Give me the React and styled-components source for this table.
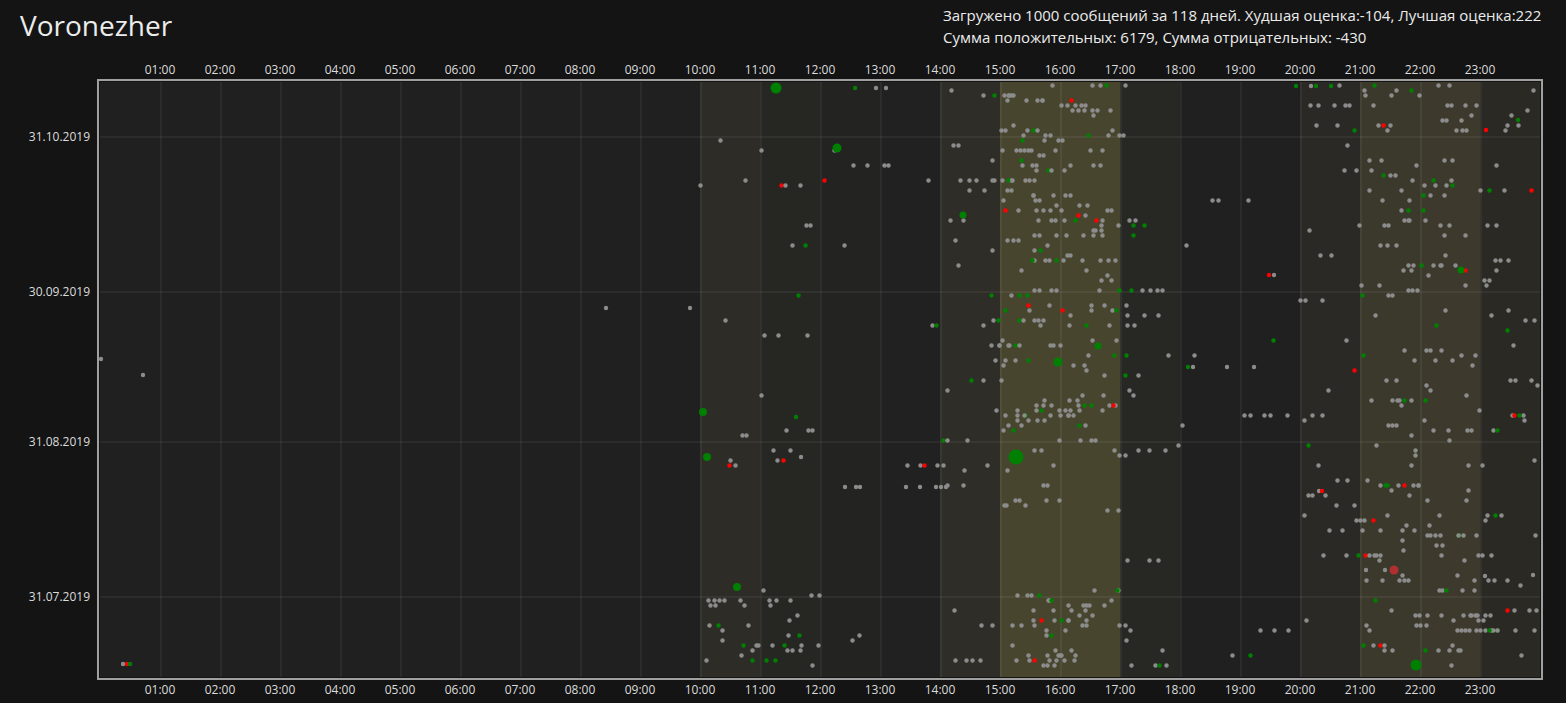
import React from "react";
import styled, { createGlobalStyle } from "styled-components";

const GlobalStyle = createGlobalStyle`
  html, body {
    margin: 0;
    padding: 0;
    background: #141414;
  }
  body {
    font-family: "Open Sans", "Noto Sans", "Liberation Sans", sans-serif;
    color: #e6e6e6;
  }
`;

// fill colour of each hour column (activity heat)
const HOUR_SHADES = [
  "#202020", "#202020", "#202020", "#202020", "#202020", "#202020",
  "#202020", "#202020", "#202020", "#202020", "#2d2c27", "#262723",
  "#232322", "#212121", "#2e2d27", "#48452f", "#48452f", "#272724",
  "#202020", "#202020", "#2a2925", "#3b392c", "#3d3a2d", "#2a2924",
];

// how often a conversation starts in each hour
const HOUR_WEIGHTS = [
  0, 0, 0, 0, 0, 0, 0, 0, 0, 0, 5, 4,
  2.5, 2, 9, 21, 20, 4, 0.8, 0.5, 6, 14, 14, 7,
];

const TICKS = [
  { label: "31.10.2019", day: 11 },
  { label: "30.09.2019", day: 42 },
  { label: "31.08.2019", day: 72 },
  { label: "31.07.2019", day: 103 },
];

const DAY_PX = 5;
const ROW_OFFSET = 3.5;

const COLORS = {
  gray: "#8c8c8c",
  green: "#008000",
  red: "#ff0000",
  dimRed: "#b03030",
};

function mulberry32(seed) {
  let a = seed;
  return function () {
    a |= 0;
    a = (a + 0x6d2b79f5) | 0;
    let t = Math.imul(a ^ (a >>> 15), 1 | a);
    t = (t + Math.imul(t ^ (t >>> 7), 61 | t)) ^ t;
    return ((t ^ (t >>> 14)) >>> 0) / 4294967296;
  };
}

const pickHour = (r) => {
  const total = HOUR_WEIGHTS.reduce((s, w) => s + w, 0);
  let v = r * total;
  for (let h = 0; h < 24; h++) {
    v -= HOUR_WEIGHTS[h];
    if (v <= 0) return h;
  }
  return 23;
};

const pushSession = (rand, dots, hour, day) => {
  const len = 1 + Math.floor(rand() * rand() * 6);
  let minute = hour * 60 + Math.floor(rand() * 60);
  for (let i = 0; i < len && minute < 1438; i++) {
    const c = rand();
    const color = c < 0.1 ? "green" : c < 0.135 ? "red" : "gray";
    dots.push({ x: minute, day, r: 2.2, color });
    minute += 4 + Math.floor(rand() * rand() * 30);
  }
};

const makeDots = () => {
  const rand = mulberry32(71119);
  const dots = [];
  let sessions = 0;
  while (sessions < 420) {
    const hour = pickHour(rand());
    const day = Math.floor(rand() * 117);
    // quiet weeks at the end of summer: almost nothing during the day
    if (day >= 81 && day <= 100 && hour < 20 && rand() < 0.94) continue;
    // the morning hours are quieter after july
    if (hour >= 10 && hour <= 13 && day < 100 && rand() < 0.35) continue;
    sessions++;
    pushSession(rand, dots, hour, day);
  }
  // july mornings
  for (let i = 0; i < 22; i++) {
    const hour = 10 + Math.floor(rand() * 2.4);
    const day = 101 + Math.floor(rand() * 16);
    pushSession(rand, dots, hour, day);
  }
  return dots;
};

// a few distinct messages placed by hand (page coords)
const NOTABLE = [
  { px: 101, py: 359, r: 2.2, color: "gray" },
  { px: 143, py: 375, r: 2.2, color: "gray" },
  { px: 123, py: 664, r: 2.2, color: "gray" },
  { px: 127, py: 664, r: 2.2, color: "red" },
  { px: 130, py: 664, r: 2.2, color: "green" },
  { px: 606, py: 308, r: 2.2, color: "gray" },
  { px: 690, py: 308, r: 2.2, color: "gray" },
  { px: 776, py: 88, r: 5.5, color: "green" },
  { px: 837, py: 148, r: 4.5, color: "green" },
  { px: 1016, py: 457, r: 7.5, color: "green" },
  { px: 1416, py: 665, r: 5.5, color: "green" },
  { px: 737, py: 587, r: 4, color: "green" },
  { px: 707, py: 457, r: 4, color: "green" },
  { px: 703, py: 412, r: 4, color: "green" },
  { px: 1058, py: 362, r: 4.5, color: "green" },
  { px: 1098, py: 346, r: 3.5, color: "green" },
  { px: 1461, py: 270, r: 3.5, color: "green" },
  { px: 963, py: 215, r: 3.5, color: "green" },
  { px: 1394, py: 570, r: 4.5, color: "dimRed" },
  { px: 855, py: 88, r: 2.2, color: "green" },
  { px: 876, py: 88, r: 2.2, color: "gray" },
  { px: 886, py: 88, r: 2.2, color: "gray" },
  { px: 1296, py: 86, r: 2.2, color: "green" },
  { px: 1311, py: 86, r: 2.2, color: "gray" },
  { px: 1316, py: 86, r: 2.2, color: "green" },
  { px: 1331, py: 86, r: 2.2, color: "green" },
  { px: 1486, py: 130, r: 2.2, color: "red" },
  { px: 1518, py: 120, r: 2.2, color: "green" },
  { px: 1269, py: 275, r: 2.2, color: "red" },
  { px: 1274, py: 275, r: 2.2, color: "gray" },
  { px: 1254, py: 367, r: 2.2, color: "gray" },
  { px: 1227, py: 367, r: 2.2, color: "gray" },
  { px: 1188, py: 367, r: 2.2, color: "green" },
  { px: 1193, py: 367, r: 2.2, color: "gray" },
  { px: 1319, py: 491, r: 2.2, color: "gray" },
  { px: 1322, py: 491, r: 2.2, color: "red" },
  { px: 1366, py: 570, r: 2.2, color: "gray" },
  { px: 1385, py: 570, r: 2.2, color: "gray" },
  { px: 1533, py: 575, r: 2.2, color: "gray" },
  { px: 1485, py: 576, r: 2.2, color: "gray" },
  { px: 845, py: 487, r: 2.2, color: "gray" },
  { px: 856, py: 487, r: 2.2, color: "gray" },
  { px: 860, py: 487, r: 2.2, color: "gray" },
  { px: 906, py: 487, r: 2.2, color: "gray" },
  { px: 920, py: 487, r: 2.2, color: "gray" },
  { px: 936, py: 487, r: 2.2, color: "gray" },
  { px: 941, py: 487, r: 2.2, color: "gray" },
  { px: 946, py: 487, r: 2.2, color: "gray" },
  { px: 801, py: 457, r: 2.2, color: "gray" },
  { px: 796, py: 417, r: 2.2, color: "green" },
];

const RANDOM_DOTS = makeDots();

const Page = styled.div`
  width: 1566px;
  height: 703px;
  overflow: hidden;
  background: #141414;
`;

const Header = styled.header`
  display: grid;
  grid-template-columns: 923px 1fr;
  height: 60px;
  padding-left: 20px;
`;

const Title = styled.h1`
  margin: 0;
  padding-top: 5px;
  font-size: 28px;
  font-weight: 400;
  line-height: 40px;
  color: #ececec;
`;

const Stats = styled.div`
  padding-top: 5px;
  font-size: 15px;
  line-height: 21.5px;
  color: #ececec;
  white-space: nowrap;
`;

const Chart = styled.section`
  display: grid;
  grid-template-columns: 97px 1446px;
  grid-template-rows: 19px 601px 20px;
`;

const HourAxis = styled.div`
  display: grid;
  grid-template-columns: repeat(23, 60px);
  padding-left: 33px;
  font-size: 12px;
  line-height: ${(p) => p.$height}px;
  color: #dcdcdc;
  text-align: center;
`;

const DateAxis = styled.div`
  display: flex;
  flex-direction: column;
  align-items: flex-end;
  padding-right: 7px;
`;

const DateLabel = styled.div`
  font-size: 12px;
  line-height: 16px;
  color: #dcdcdc;
  margin-top: ${(p) => p.$gap}px;
`;

const Frame = styled.div`
  box-sizing: border-box;
  border: 2px solid #a0a0a0;
  padding: 1px;
`;

const Plot = styled.div`
  position: relative;
  display: flex;
  width: 1440px;
  height: 595px;
`;

const HourColumn = styled.div`
  flex: 0 0 60px;
  background: ${(p) => p.$shade};
  box-shadow: ${(p) => (p.$first ? "none" : "inset 2px 0 0 rgba(255, 255, 255, 0.05)")};
`;

const Overlay = styled.svg`
  position: absolute;
  left: 0;
  top: 0;
  overflow: visible;
`;

const hourLabel = (h) => `${String(h).padStart(2, "0")}:00`;
const HOURS = Array.from({ length: 23 }, (_, i) => hourLabel(i + 1));

const App = () => {
  let prev = 0;
  const ticks = TICKS.map((t) => {
    const center = 3 + t.day * DAY_PX;
    const gap = center - 8 - prev;
    prev = center + 8;
    return { ...t, gap };
  });

  return (
    <Page>
      <GlobalStyle />
      <Header>
        <Title>Voronezher</Title>
        <Stats>
          <div>Загружено 1000 сообщений за 118 дней. Худшая оценка:-104, Лучшая оценка:222</div>
          <div>Сумма положительных: 6179, Сумма отрицательных: -430</div>
        </Stats>
      </Header>
      <Chart>
        <div />
        <HourAxis $height={19}>
          {HOURS.map((h) => (
            <span key={h}>{h}</span>
          ))}
        </HourAxis>
        <DateAxis>
          {ticks.map((t) => (
            <DateLabel key={t.label} $gap={t.gap}>
              {t.label}
            </DateLabel>
          ))}
        </DateAxis>
        <Frame>
          <Plot>
            {HOUR_SHADES.map((shade, i) => (
              <HourColumn key={i} $shade={shade} $first={i === 0} />
            ))}
            <Overlay width="1440" height="595" viewBox="0 0 1440 595">
              {TICKS.map((t) => (
                <rect
                  key={t.label}
                  x="0"
                  y={t.day * DAY_PX - 1}
                  width="1440"
                  height="2"
                  fill="rgba(255,255,255,0.05)"
                />
              ))}
              {RANDOM_DOTS.map((d, i) => (
                <circle
                  key={"r" + i}
                  cx={d.x + 0.5}
                  cy={ROW_OFFSET + d.day * DAY_PX}
                  r={d.r}
                  fill={COLORS[d.color]}
                />
              ))}
              {NOTABLE.map((d, i) => (
                <circle
                  key={"n" + i}
                  cx={d.px - 100}
                  cy={d.py - 82}
                  r={d.r}
                  fill={COLORS[d.color]}
                />
              ))}
            </Overlay>
          </Plot>
        </Frame>
        <div />
        <HourAxis $height={20}>
          {HOURS.map((h) => (
            <span key={h}>{h}</span>
          ))}
        </HourAxis>
      </Chart>
    </Page>
  );
};

export default App;
